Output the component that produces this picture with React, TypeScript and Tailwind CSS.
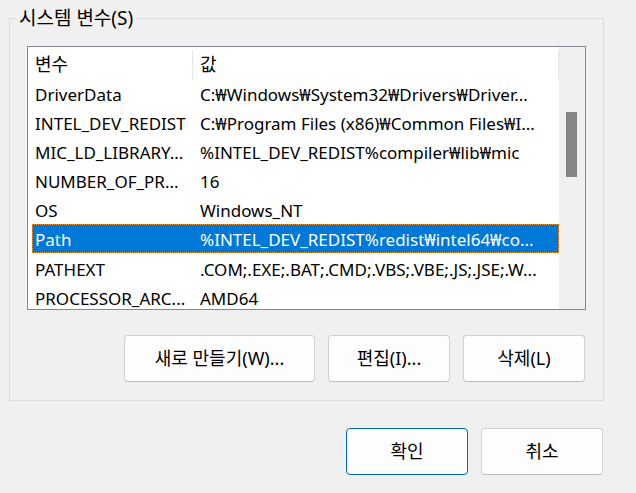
import React from 'react';

const font = { fontFamily: '"Segoe UI", "Noto Sans", "Noto Sans CJK KR", sans-serif' };

const rows = [
  { name: 'DriverData', value: 'C:₩Windows₩System32₩Drivers₩Driver...' },
  { name: 'INTEL_DEV_REDIST', value: 'C:₩Program Files (x86)₩Common Files₩I...' },
  { name: 'MIC_LD_LIBRARY...', value: '%INTEL_DEV_REDIST%compiler₩lib₩mic' },
  { name: 'NUMBER_OF_PR...', value: '16' },
  { name: 'OS', value: 'Windows_NT' },
  { name: 'Path', value: '%INTEL_DEV_REDIST%redist₩intel64₩co...', selected: true },
  { name: 'PATHEXT', value: '.COM;.EXE;.BAT;.CMD;.VBS;.VBE;.JS;.JSE;.W...' },
  { name: 'PROCESSOR_ARC...', value: 'AMD64' },
];

function Button({ label, width, primary }: { label: string; width: string; primary?: boolean }) {
  return (
    <button
      className={`${width} h-[47px] rounded-[4px] bg-[#fdfdfd] text-[18px] text-black border pb-[1px] ${
        primary ? 'border-[#0067c0]' : 'border-[#d0d0d0] border-b-[#bcbcbc]'
      }`}
    >
      {label}
    </button>
  );
}

export default function App() {
  return (
    <div className="w-[636px] h-[493px] bg-[#f0f0f0] text-black overflow-hidden pt-[18px] pl-[9px]" style={font}>
      {/* System variables group */}
      <div className="relative w-[595px] h-[383px] border border-[#dcdcdc] pt-[27px] pl-[17px]">
        <span className="absolute -top-[14px] left-[6px] px-[3px] bg-[#f0f0f0] text-[19px] leading-[26px]">
          시스템 변수(S)
        </span>

        <div className="w-[559px] h-[264px] border border-[#828790] bg-white flex overflow-hidden">
          <div className="flex-1 flex flex-col">
            {/* Header */}
            <div className="h-[32px] flex text-[18px] shrink-0 pt-[3px]">
              <div className="w-[165px] pl-[7px] flex items-center border-r border-[#e5e5e5]">변수</div>
              <div className="flex-1 pl-[7px] flex items-center border-r border-[#e5e5e5]">값</div>
            </div>
            {/* Rows */}
            <div className="flex flex-col pl-[4px]">
              {rows.map((r) => (
                <div
                  key={r.name}
                  className={`h-[29px] shrink-0 flex items-center text-[17px] whitespace-nowrap pt-[3px] ${
                    r.selected
                      ? 'bg-[#0078d7] text-white outline-1 outline-dotted outline-[#f39c3c] -outline-offset-1 h-[28px] mb-[1px]'
                      : ''
                  }`}
                >
                  <div className="w-[168px] pl-[3px] shrink-0">{r.name}</div>
                  <div className="flex-1 overflow-hidden">{r.value}</div>
                </div>
              ))}
            </div>
          </div>
          {/* Scrollbar */}
          <div className="w-[26px] bg-[#f0f0f0] shrink-0 pt-[65px] pl-[7px]">
            <div className="w-[11px] h-[65px] bg-[#858585]" />
          </div>
        </div>

        <div className="flex justify-end gap-[13px] mt-[25px] pr-[1px] w-[559px]">
          <Button label="새로 만들기(W)..." width="w-[191px]" />
          <Button label="편집(I)..." width="w-[122px]" />
          <Button label="삭제(L)" width="w-[122px]" />
        </div>
      </div>

      <div className="flex justify-end gap-[13px] mt-[27px] w-[594px]">
        <Button label="확인" width="w-[122px]" primary />
        <Button label="취소" width="w-[122px]" />
      </div>
    </div>
  );
}
